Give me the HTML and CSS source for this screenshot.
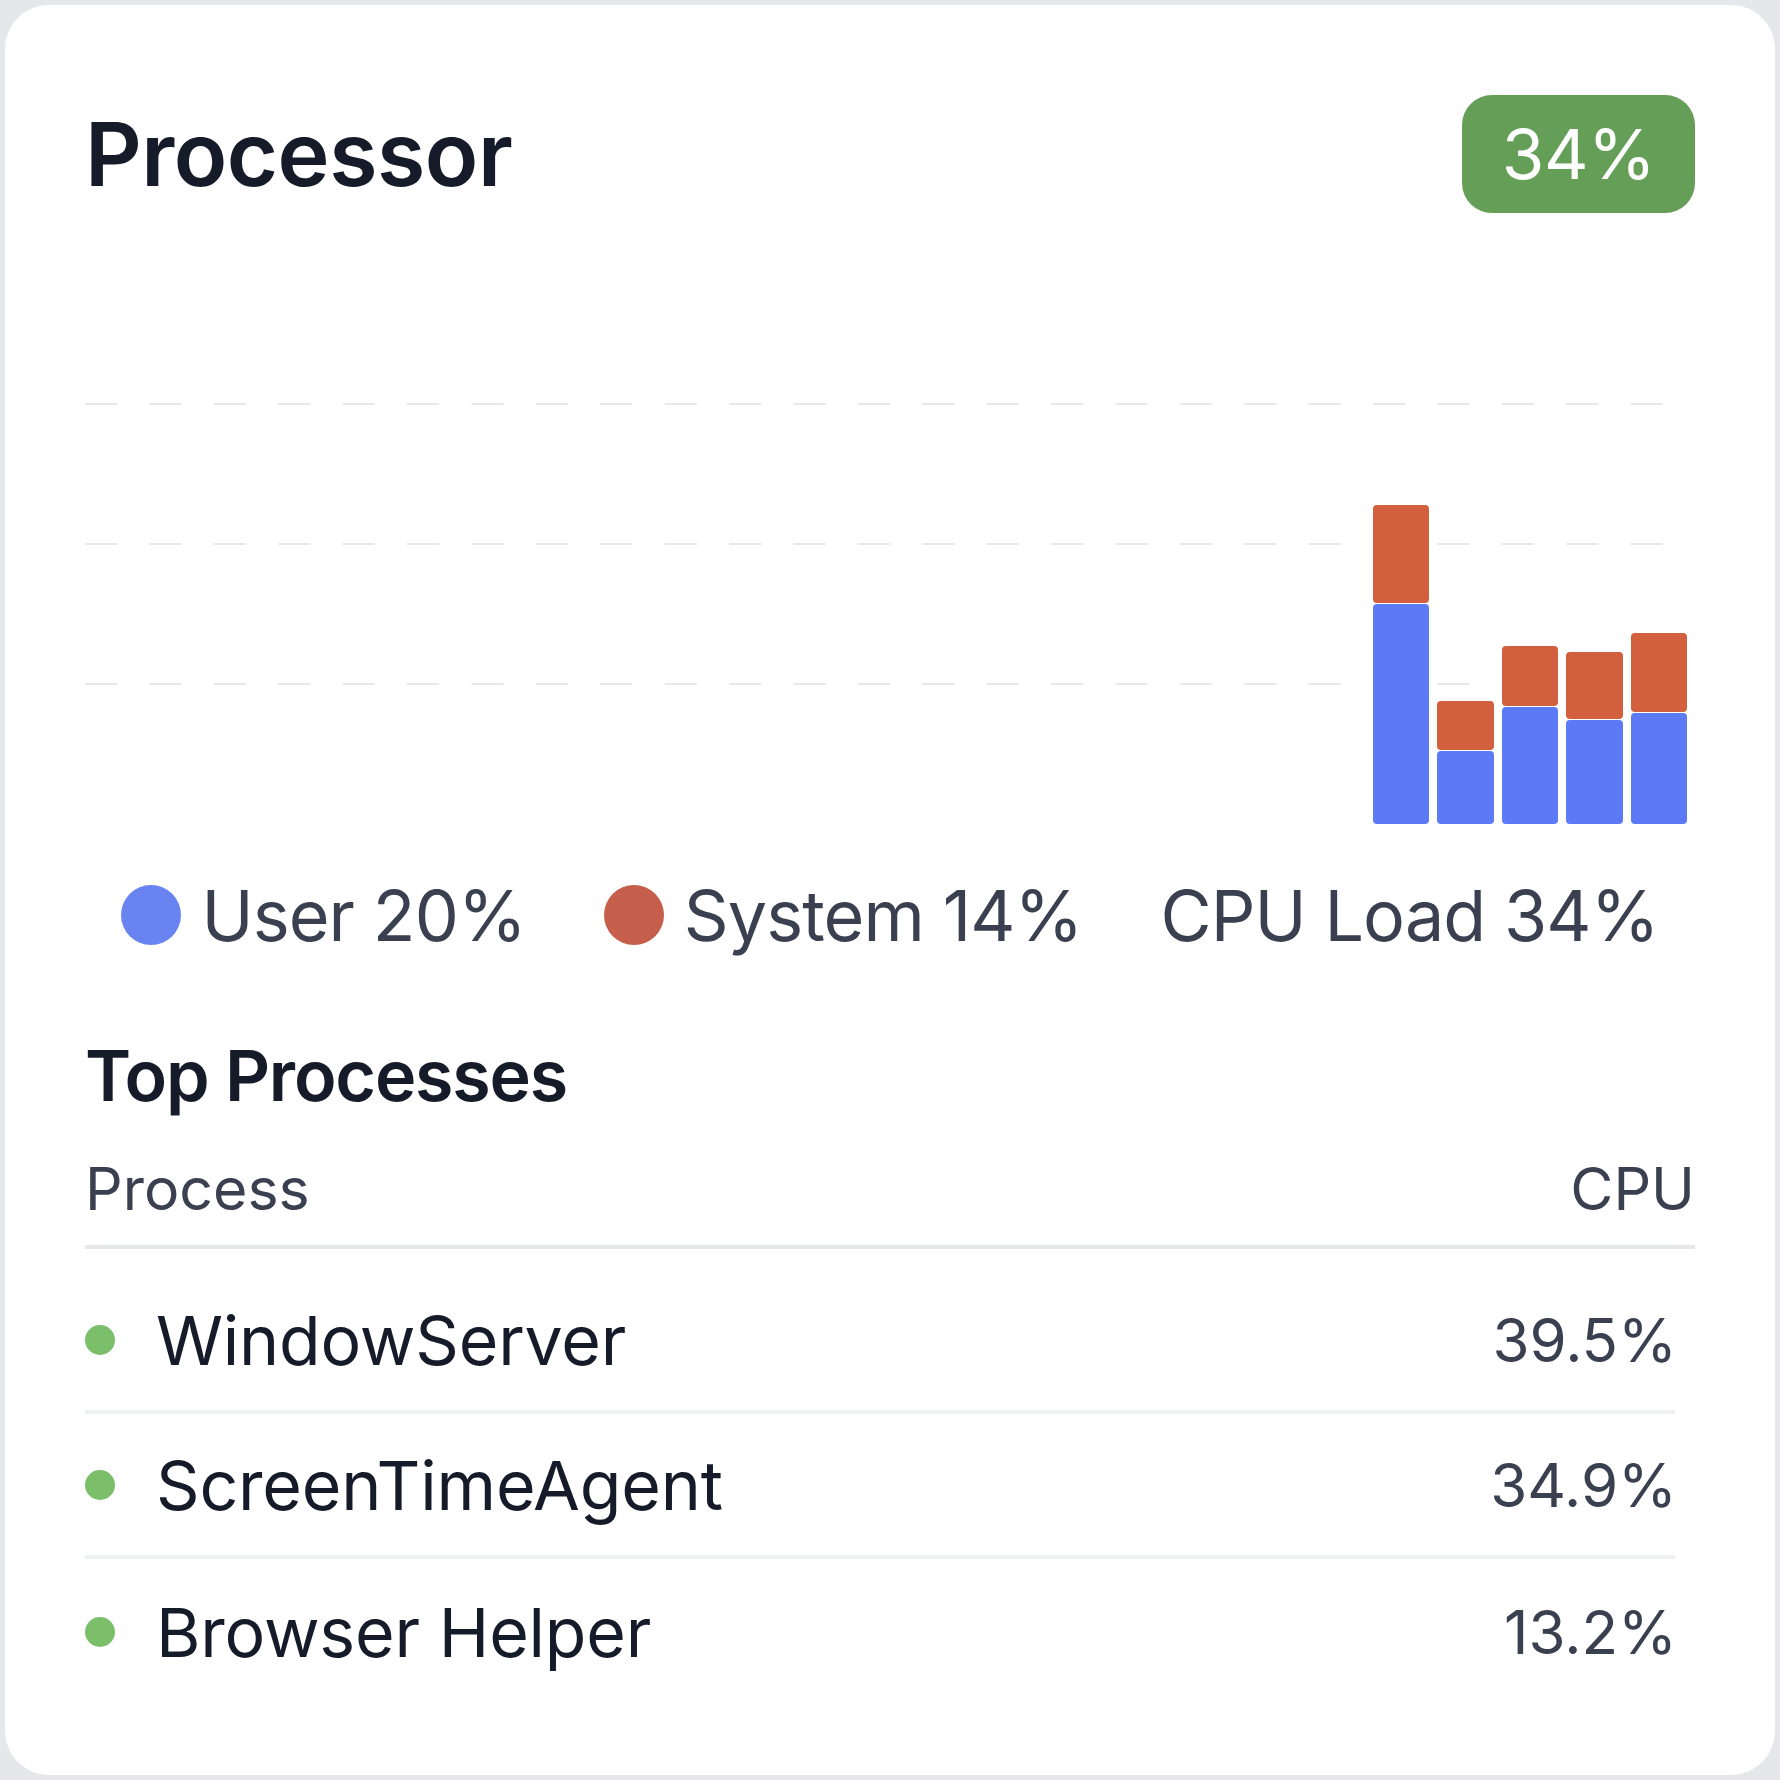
FILE: index.html
```html
<!DOCTYPE html>
<html lang="en">
<head>
<meta charset="utf-8">
<title>Processor</title>
<link rel="stylesheet" href="styles.css">
</head>
<body>
<div class="card">
  <div class="header">
    <h1 class="title">Processor</h1>
    <div class="badge">34%</div>
  </div>

  <div class="chart">
    <svg class="grid" width="1610" height="560" viewBox="0 0 1610 560">
      <line x1="0" x2="1610" y1="140" y2="140"></line>
      <line x1="0" x2="1610" y1="280" y2="280"></line>
      <line x1="0" x2="1610" y1="420" y2="420"></line>
    </svg>
    <div class="bars">
      <div class="slot"></div><div class="slot"></div><div class="slot"></div><div class="slot"></div><div class="slot"></div>
      <div class="slot"></div><div class="slot"></div><div class="slot"></div><div class="slot"></div><div class="slot"></div>
      <div class="slot"></div><div class="slot"></div><div class="slot"></div><div class="slot"></div><div class="slot"></div>
      <div class="slot"></div><div class="slot"></div><div class="slot"></div><div class="slot"></div><div class="slot"></div>
      <div class="slot"><div class="seg sys" style="height:98px"></div><div class="seg usr" style="height:220px"></div></div>
      <div class="slot"><div class="seg sys" style="height:49px"></div><div class="seg usr" style="height:73px"></div></div>
      <div class="slot"><div class="seg sys" style="height:60px"></div><div class="seg usr" style="height:117px"></div></div>
      <div class="slot"><div class="seg sys" style="height:67px"></div><div class="seg usr" style="height:104px"></div></div>
      <div class="slot"><div class="seg sys" style="height:79px"></div><div class="seg usr" style="height:111px"></div></div>
    </div>
  </div>

  <div class="legend">
    <div class="legend-item"><span class="legend-dot dot-user"></span><span>User 20%</span></div>
    <div class="legend-item"><span class="legend-dot dot-system"></span><span>System 14%</span></div>
    <div class="legend-item"><span>CPU Load 34%</span></div>
  </div>

  <h2 class="section-title">Top Processes</h2>

  <div class="table">
    <div class="table-head">
      <span>Process</span>
      <span>CPU</span>
    </div>
    <div class="table-body">
      <div class="row">
        <span class="status"></span>
        <span class="name">WindowServer</span>
        <span class="value">39.5%</span>
      </div>
      <div class="row">
        <span class="status"></span>
        <span class="name">ScreenTimeAgent</span>
        <span class="value">34.9%</span>
      </div>
      <div class="row">
        <span class="status"></span>
        <span class="name">Browser Helper</span>
        <span class="value">13.2%</span>
      </div>
    </div>
  </div>
</div>
</body>
</html>
```

FILE: styles.css
```css
* {
  box-sizing: border-box;
}

html, body {
  margin: 0;
  padding: 0;
}

body {
  background: #e5e7eb;
  font-family: Inter, "Noto Sans", "Liberation Sans", sans-serif;
  width: 1780px;
  height: 1780px;
  overflow: hidden;
}

.card {
  margin: 5px;
  width: 1770px;
  height: 1770px;
  background: #ffffff;
  border-radius: 44px;
  padding: 95px 80px 0 80px;
}

.header {
  display: flex;
  align-items: center;
  justify-content: space-between;
  height: 118px;
  margin-top: -5px;
}

.title {
  margin: 0;
  font-size: 88px;
  font-weight: 600;
  line-height: 1;
  color: #161b2a;
  letter-spacing: -0.5px;
}

.badge {
  background: #659e56;
  color: #ffffff;
  font-size: 69px;
  font-weight: 400;
  height: 118px;
  width: 233px;
  border-radius: 30px;
  display: flex;
  align-items: center;
  justify-content: center;
  letter-spacing: -0.5px;
}

.chart {
  position: relative;
  margin-top: 51px;
  width: 1610px;
  height: 560px;
}

.grid {
  position: absolute;
  left: 0;
  top: 0;
}

.grid line {
  stroke: #e8e8ea;
  stroke-width: 2;
  stroke-dasharray: 32.2 32.2;
}

.bars {
  position: relative;
  display: grid;
  grid-template-columns: repeat(25, 1fr);
  height: 560px;
}

.slot {
  padding-right: 8px;
  display: flex;
  flex-direction: column;
  justify-content: flex-end;
  gap: 1.5px;
}

.seg {
  border-radius: 4px;
}

.usr {
  background: #5c7af5;
}

.sys {
  background: #d25f3d;
}

.legend {
  margin-top: 49px;
  display: flex;
  justify-content: center;
  align-items: center;
  gap: 78px;
  height: 84px;
  font-size: 70px;
  color: #3a4050;
  letter-spacing: -0.9px;
}

.legend-item {
  display: flex;
  align-items: center;
  gap: 20px;
}

.legend-dot {
  width: 60px;
  height: 60px;
  border-radius: 50%;
}

.dot-user {
  background: #6984f1;
}

.dot-system {
  background: #c55f4b;
}

.section-title {
  margin: 76px 0 0 0;
  font-size: 70px;
  font-weight: 600;
  line-height: 85px;
  color: #161b2a;
  letter-spacing: -1.2px;
}

.table {
  margin-top: 35px;
}

.table-head {
  display: flex;
  justify-content: space-between;
  font-size: 59px;
  line-height: 72px;
  color: #3a4050;
  padding-bottom: 20px;
  border-bottom: 4px solid #e5e7eb;
}

.table-body {
  padding-top: 20px;
  margin-right: 20px;
}

.row {
  display: flex;
  align-items: center;
  height: 145px;
  border-bottom: 4px solid #f0f1f3;
}

.row:last-child {
  border-bottom: none;
}

.status {
  width: 30px;
  height: 30px;
  border-radius: 50%;
  background: #7bbf6a;
  flex: none;
}

.name {
  margin-left: 41px;
  font-size: 68px;
  color: #161b2a;
  flex: 1;
  letter-spacing: -0.2px;
}

.value {
  font-size: 60px;
  color: #3a4050;
  margin-right: -2px;
}
```
